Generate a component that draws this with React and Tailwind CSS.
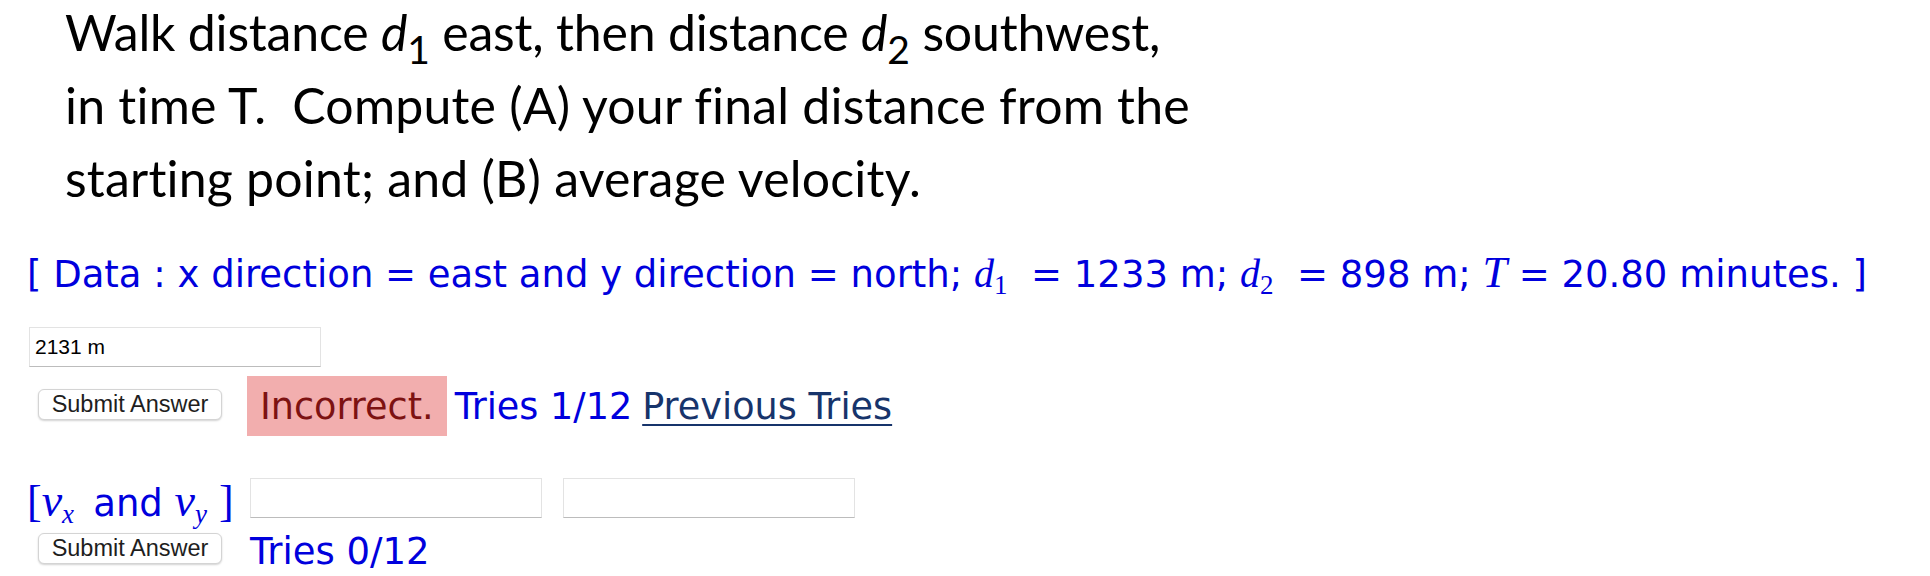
import React from "react";

const BLUE = "text-[#0000dd]";

const SubmitButton = () => (
  <button
    type="button"
    className="block h-[31px] w-[184px] shrink-0 rounded-[6px] border border-[#d4d4d4] bg-white font-['Liberation_Sans',sans-serif] text-[23.5px] leading-none text-[#1e1e1e] shadow-[0_1px_2px_rgba(0,0,0,0.18)]"
  >
    Submit Answer
  </button>
);

const AnswerBox = ({ value = "", className = "" }) => (
  <input
    type="text"
    readOnly
    defaultValue={value}
    className={`block h-[40px] w-[292px] shrink-0 border border-[#e3e3e3] border-b-[#bcbcbc] bg-white px-[5px] font-['Liberation_Sans',sans-serif] text-[21px] text-black outline-none ${className}`}
  />
);

const MathVar = ({ v, sub, subItalic = false, size = "text-[40px]" }) => (
  <span className={`font-['Liberation_Serif',serif] italic leading-none ${size}`}>
    {v}
    {sub && (
      <span
        className={`text-[27px] leading-none align-[-7px] ${subItalic ? "italic" : "not-italic"}`}
      >
        {sub}
      </span>
    )}
  </span>
);

const App = () => {
  return (
    <div className="h-[576px] w-[1930px] overflow-hidden bg-white text-black">
      {/* question */}
      <div className="-mt-[4px] pl-[65px] font-['Lato',sans-serif] text-[50px] leading-[73px] tracking-[0.2px]">
        <div className="tracking-[-0.2px]">
          Walk distance <i>d</i>
          <span className="text-[39px] leading-none align-[-13px]">1</span> east, then
          distance <i>d</i>
          <span className="text-[39px] leading-none align-[-13px]">2</span> southwest,
        </div>
        <div>in time T.&nbsp; Compute (A) your final distance from the</div>
        <div>starting point; and (B) average velocity.</div>
      </div>

      {/* data */}
      <div
        className={`mt-[36px] h-[42px] whitespace-nowrap pl-[27px] font-['DejaVu_Sans',sans-serif] text-[37px] leading-[42px] ${BLUE}`}
      >
        [ Data : x direction = east and y direction = north; <MathVar v="d" sub="1" />
        &nbsp; = 1233 m; <MathVar v="d" sub="2" />&nbsp; = 898 m;{" "}
        <MathVar v="T" size="text-[44px]" /> = 20.80 minutes. ]
      </div>

      {/* part A */}
      <div className="mt-[34px] pl-[29px]">
        <AnswerBox value="2131 m" className="h-[39px]" />
      </div>
      <div className="mt-[9px] flex h-[60px] items-start font-['DejaVu_Sans',sans-serif] text-[36.6px]">
        <div className="ml-[38px] mt-[13px]">
          <SubmitButton />
        </div>
        <div className="ml-[25px] h-[60px] bg-[#f2aeae] px-[13px] pt-[10px] leading-[42px] text-[#7d1212]">
          Incorrect.
        </div>
        <div className={`ml-[8px] pt-[10px] leading-[42px] ${BLUE}`}>Tries 1/12</div>
        <a
          href="#"
          className="ml-[10px] pt-[10px] leading-[42px] text-[#17346b] underline decoration-[2px] underline-offset-[5px]"
        >
          Previous Tries
        </a>
      </div>

      {/* part B */}
      <div className="mt-[42px] flex h-[40px] items-start pl-[27px]">
        <div
          className={`h-[40px] w-[201px] shrink-0 whitespace-nowrap font-['DejaVu_Sans',sans-serif] text-[37px] leading-[33px] ${BLUE}`}
        >
          <span className="font-['Liberation_Serif',serif] text-[44px] leading-none">[</span>
          <MathVar v="v" sub="x" subItalic size="text-[46px]" />
          &nbsp;&thinsp;and <MathVar v="v" sub="y" subItalic size="text-[46px]" />
          <span className="ml-[12px] font-['Liberation_Serif',serif] text-[44px] leading-none">
            ]
          </span>
        </div>
        <AnswerBox className="ml-[22px]" />
        <AnswerBox className="ml-[21px]" />
      </div>
      <div className="mt-[15px] flex items-start font-['DejaVu_Sans',sans-serif] text-[37px]">
        <div className="ml-[38px]">
          <SubmitButton />
        </div>
        <div className={`ml-[28px] leading-[37px] ${BLUE}`}>Tries 0/12</div>
      </div>
    </div>
  );
};

export default App;
